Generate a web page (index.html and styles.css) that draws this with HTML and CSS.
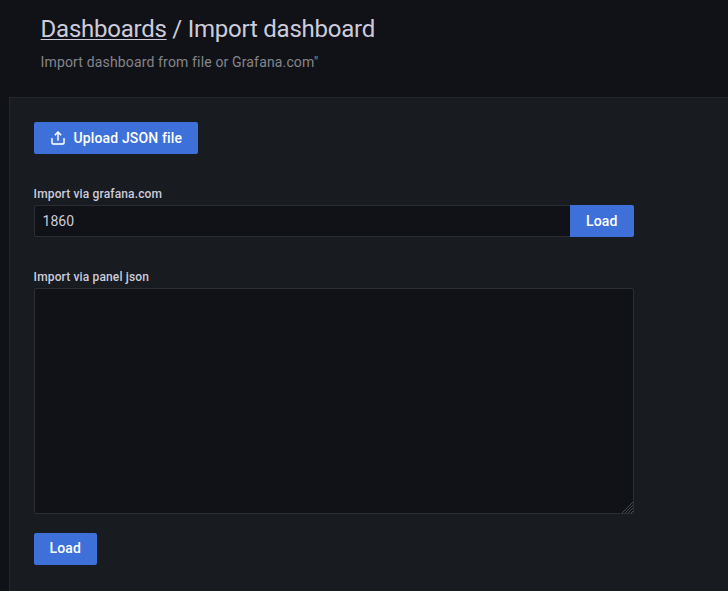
FILE: index.html
```html
<!DOCTYPE html>
<html lang="en">
<head>
<meta charset="utf-8">
<title>Import dashboard</title>
<link rel="stylesheet" href="styles.css">
</head>
<body>
<header class="header">
  <h1 class="title"><a class="crumb" href="#">Dashboards</a> / Import dashboard</h1>
  <p class="subtitle">Import dashboard from file or Grafana.com"</p>
</header>
<main class="panel">
  <button class="button upload" type="button">
    <svg class="icon" viewBox="0 0 24 24" width="16" height="16" fill="currentColor"><path d="M8.71 7.71 11 5.41V15a1 1 0 0 0 2 0V5.41l2.29 2.3a1 1 0 0 0 1.42-1.42l-4-4a1 1 0 0 0-1.42 0l-4 4a1 1 0 1 0 1.42 1.42ZM21 12a1 1 0 0 0-1 1v6a1 1 0 0 1-1 1H5a1 1 0 0 1-1-1v-6a1 1 0 0 0-2 0v6a3 3 0 0 0 3 3h14a3 3 0 0 0 3-3v-6a1 1 0 0 0-1-1Z"/></svg>
    <span>Upload JSON file</span>
  </button>
  <form class="form">
    <label class="label" for="gcom">Import via grafana.com</label>
    <div class="row">
      <input class="field input" id="gcom" type="text" value="1860">
      <button class="button joined" type="button">Load</button>
    </div>
    <label class="label" for="json">Import via panel json</label>
    <div class="area-wrap">
      <textarea class="field area" id="json"></textarea>
      <svg class="grip" viewBox="0 0 11 11" width="11" height="11"><path d="M0 11 11 0M3 11l8-8M6 11l5-5M9 11l2-2"/></svg>
    </div>
    <button class="button submit" type="button">Load</button>
  </form>
</main>
</body>
</html>
```

FILE: styles.css
```css
* { box-sizing: border-box; }
html { overflow: hidden; }
body {
  margin: 0;
  height: 591px;
  display: flex;
  flex-direction: column;
  background: #111217;
  color: #ccccdc;
  font-family: Roboto, sans-serif;
  font-size: 14px;
  line-height: 22px;
}
.header { height: 97px; padding: 15px 0 0 40.6px; }
.title { margin: 0; font-size: 24px; line-height: 28px; font-weight: 400; letter-spacing: -0.24px; }
.crumb { color: inherit; text-decoration: underline; text-decoration-thickness: 1px; text-underline-offset: 2px; }
.subtitle { margin: 8px 0 0; color: #85858b; letter-spacing: 0.15px; }
.panel {
  flex: 1;
  margin-left: 9px;
  padding: 24px;
  background: #181b1f;
  border: 1px solid #25272c;
  border-right: 0;
  border-bottom: 0;
}
.button {
  display: inline-flex;
  align-items: center;
  justify-content: center;
  height: 32px;
  padding: 0;
  border: 0;
  border-radius: 2px;
  background: #3d71d9;
  color: #fff;
  font: 500 14px/22px Roboto, sans-serif;
  letter-spacing: 0.15px;
}
.upload { display: flex; gap: 7.5px; width: 164px; }
.icon { stroke: currentColor; stroke-width: 0.4; }
.form { width: 600px; margin-top: 33px; }
.label {
  display: block;
  margin: 0 0 3px -0.4px;
  font-size: 12px;
  font-weight: 500;
  line-height: 15px;
  letter-spacing: 0.14px;
}
.row { display: flex; margin-bottom: 33px; }
.field {
  background: #111217;
  border: 1px solid #2c2e33;
  border-radius: 2px;
  color: #ccccdc;
  font: 14px/22px Roboto, sans-serif;
  padding: 0 7.6px;
}
.input { flex: 1; height: 32px; border-right: 0; border-radius: 2px 0 0 2px; }
.joined { width: 64px; padding-right: 0.4px; border-radius: 0 2px 2px 0; }
.area-wrap { position: relative; margin-bottom: 19px; }
.area { display: block; width: 600px; height: 226px; resize: none; }
.grip {
  position: absolute;
  right: 1px;
  bottom: 1px;
  fill: none;
  stroke: #47484b;
  stroke-width: 1;
}
.submit { width: 63px; padding: 0 0.6px 2px 0; }
```
